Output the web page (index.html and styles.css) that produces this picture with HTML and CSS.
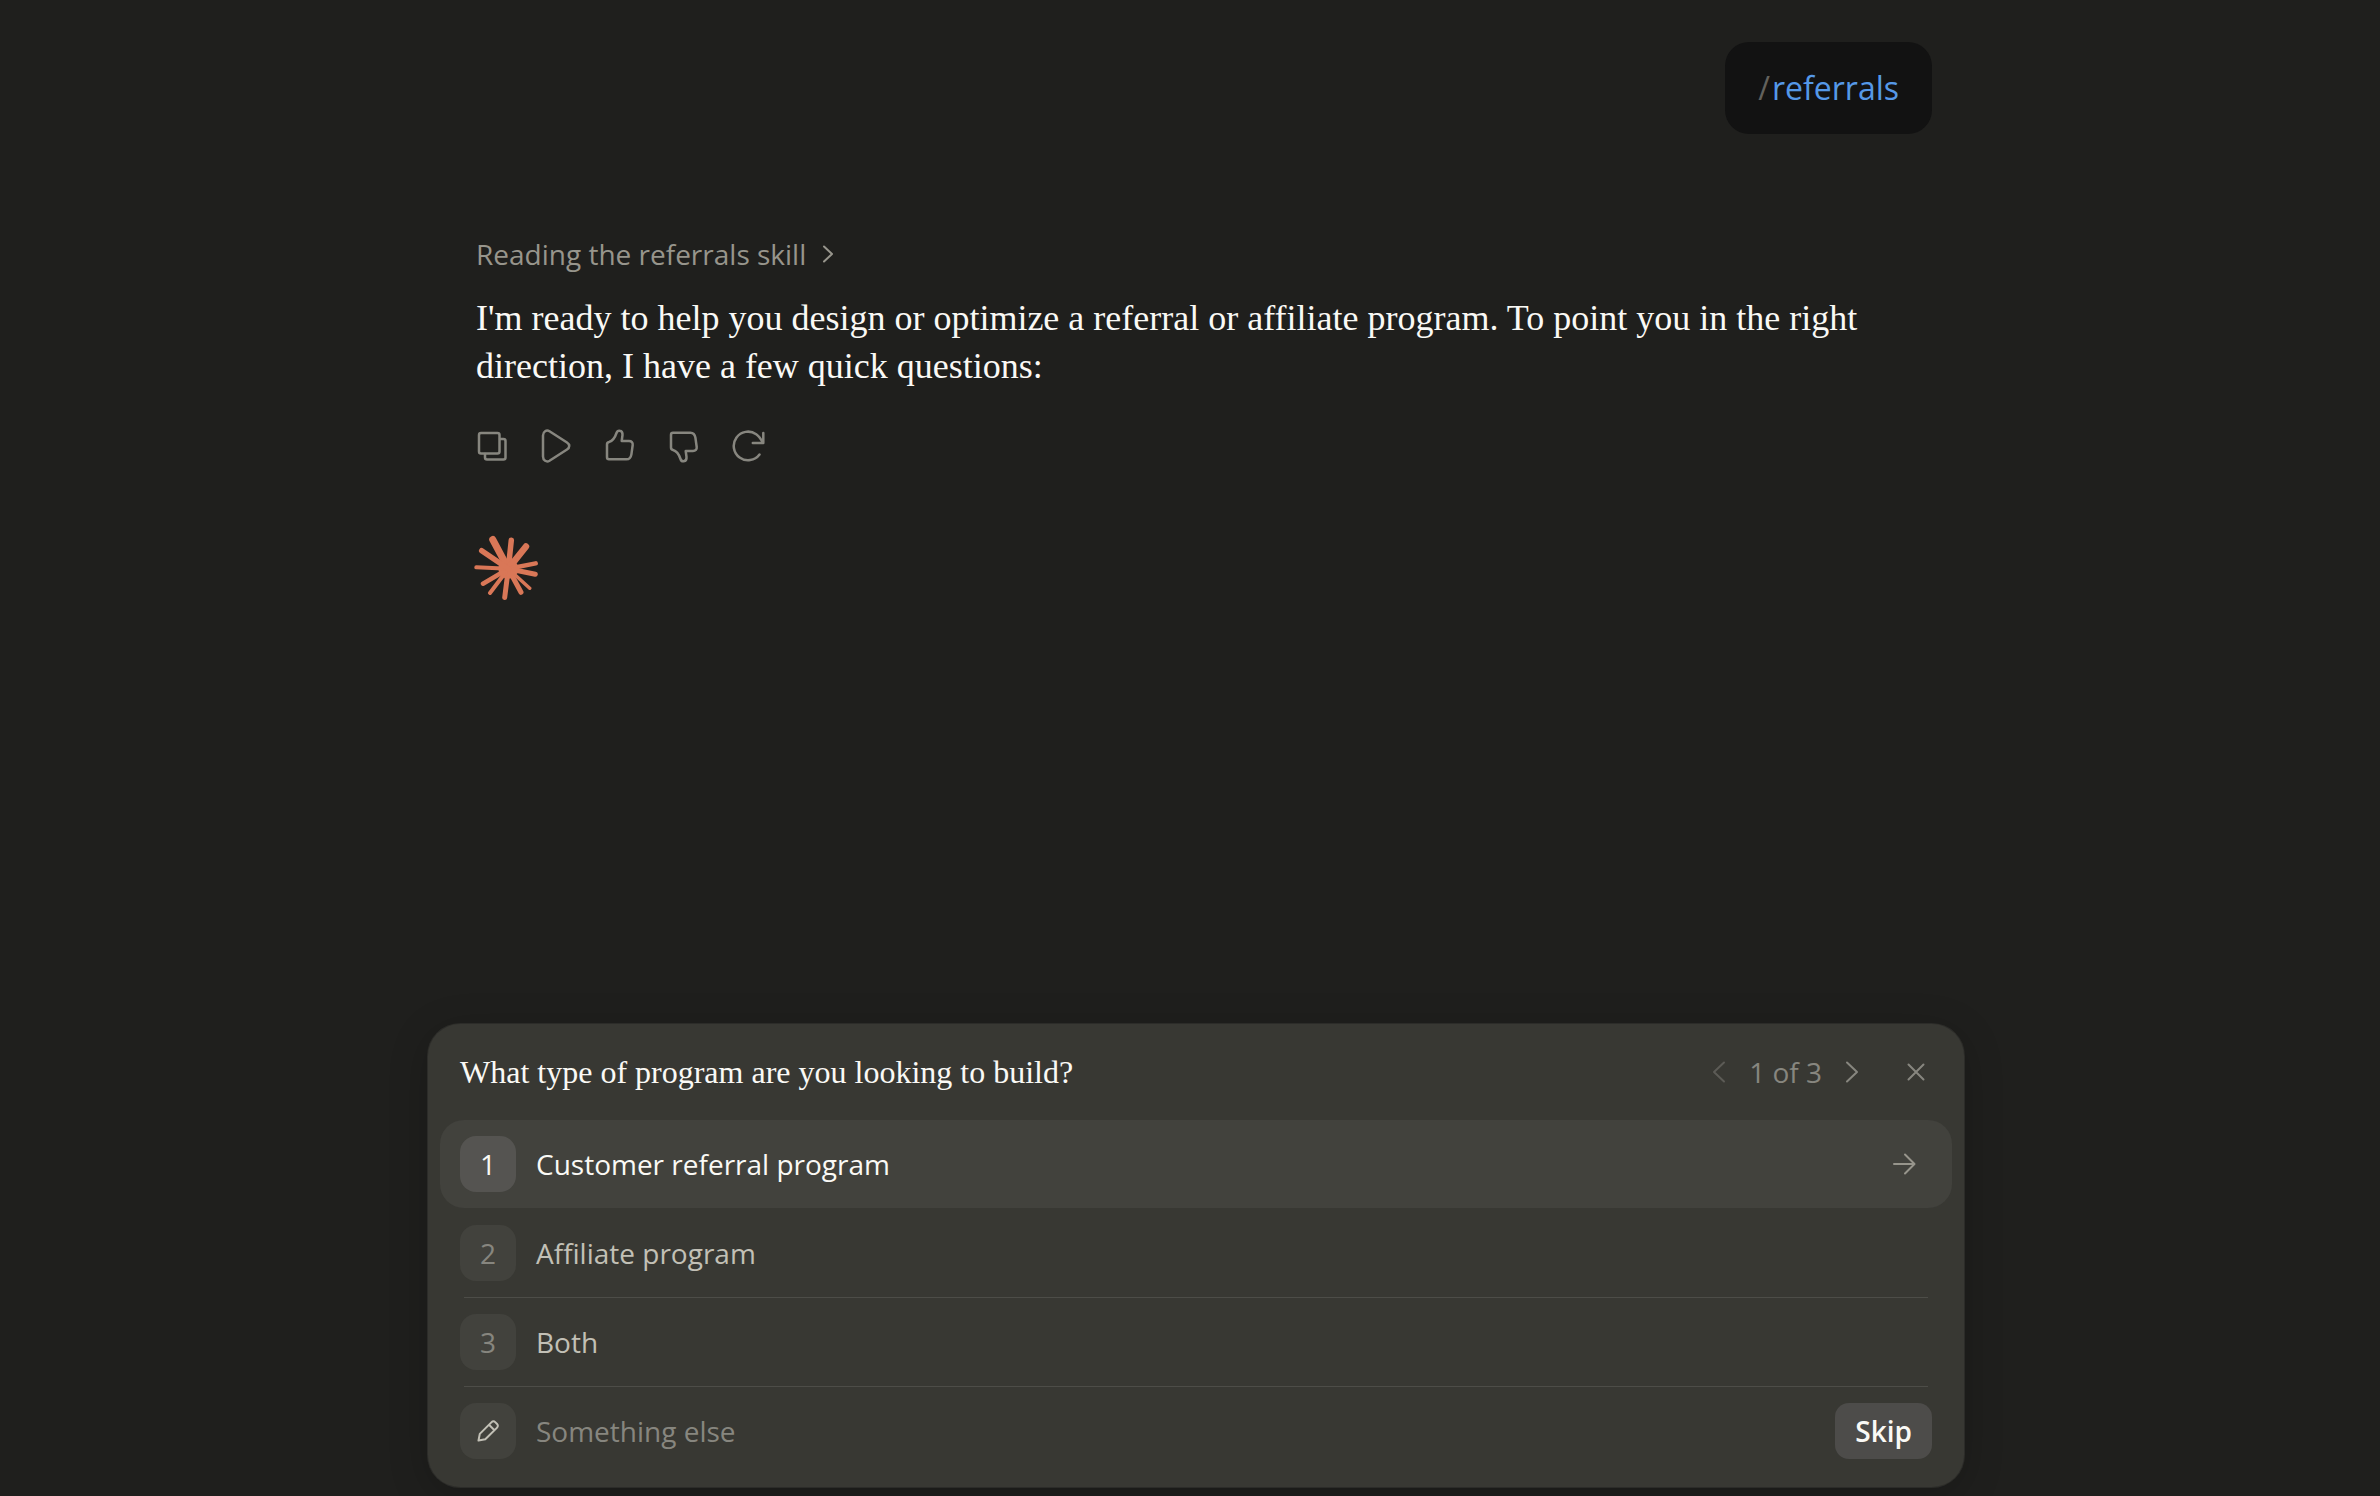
FILE: index.html
```html
<!DOCTYPE html>
<html lang="en">
<head>
  <meta charset="UTF-8" />
  <meta name="viewport" content="width=device-width, initial-scale=1.0"/>
  <title>Referrals</title>
  <link rel="stylesheet" href="styles.css">
</head>
<body>
  <div class="page">
    <main class="thread">
      <div class="bubble"><span class="slash">/</span><span class="command">referrals</span></div>

      <div class="reply">
        <button class="status" type="button">
          Reading the referrals skill
          <svg class="status-chevron" viewBox="0 0 16 24"><path d="M4 4.500l8 7.500-8 7.500"/></svg>
        </button>
        <p class="message">I'm ready to help you design or optimize a referral or affiliate program. To point you in the right direction, I have a few quick questions:</p>

        <div class="actions">
          <button class="action" type="button" aria-label="Copy">
            <svg viewBox="0 0 40 40"><rect x="7" y="7" width="20.500" height="20.500" rx="2"/><path d="M28 13h3.500a2 2 0 0 1 2 2v16.500a2 2 0 0 1-2 2H15a2 2 0 0 1-2-2V28"/></svg>
          </button>
          <button class="action" type="button" aria-label="Play">
            <svg viewBox="0 0 40 40"><path d="M7 9.500c0-4 3.500-6 6.500-4.200l17.500 11.200c3 1.900 3 5.100 0 7l-17.500 11.200c-3 1.800-6.500-.2-6.500-4.200z"/></svg>
          </button>
          <button class="action" type="button" aria-label="Good response">
            <svg viewBox="0 0 40 40"><path d="M7 18.500c0-1.500.8-2.300 2-2.500 4-1 6-4.500 7.500-9 .7-2 2-2.500 3.200-2.300 2.300.3 3 2 2.800 4.300l-.8 6h7.300c2.500 0 4 1.500 3.700 4l-1.300 9.300c-.5 3.200-2 5-5 5H9c-1.200 0-2-.8-2-2z"/></svg>
          </button>
          <button class="action" type="button" aria-label="Bad response">
            <svg viewBox="0 0 40 40"><path transform="translate(0 40) scale(1 -1)" d="M7 18.500c0-1.500.8-2.300 2-2.500 4-1 6-4.500 7.500-9 .7-2 2-2.500 3.200-2.300 2.300.3 3 2 2.800 4.300l-.8 6h7.300c2.500 0 4 1.500 3.700 4l-1.300 9.300c-.5 3.200-2 5-5 5H9c-1.200 0-2-.8-2-2z"/></svg>
          </button>
          <button class="action" type="button" aria-label="Retry">
            <svg viewBox="0 0 40 40"><path d="M31.500 28.500A14.300 14.300 0 1 1 28.200 8.200c3 2 4.800 5 6.800 8.600M35.300 7v10H24.800"/></svg>
          </button>
        </div>

        <svg class="spark" viewBox="0 0 68 68" aria-hidden="true">
          <circle cx="34.300" cy="34.700" r="10"/>
          <path stroke-width="7" d="M34.300 34.700L18.700 5.500"/>
          <path stroke-width="5.500" d="M34.300 34.700L37.300 6.300"/>
          <path stroke-width="6.500" d="M34.300 34.700L52 12.500"/>
          <path stroke-width="4.500" d="M34.300 34.700L61.700 29.400"/>
          <path stroke-width="5" d="M34.300 34.700L61.300 40.300"/>
          <path stroke-width="3.500" d="M34.300 34.700L55.700 54.200"/>
          <path stroke-width="5" d="M34.300 34.700L47 58.300"/>
          <path stroke-width="5" d="M34.300 34.700L30.700 63.500"/>
          <path stroke-width="4" d="M34.300 34.700L16 59"/>
          <path stroke-width="4.500" d="M34.300 34.700L9 49.700"/>
          <path stroke-width="4" d="M34.300 34.700L2.300 33.300"/>
          <path stroke-width="5.500" d="M34.300 34.700L7.700 16.700"/>
        </svg>
      </div>
    </main>

    <form class="panel">
      <div class="panel-header">
        <h2 class="question">What type of program are you looking to build?</h2>
        <div class="pager">
          <button class="pager-btn" type="button" aria-label="Previous" disabled>
            <svg viewBox="0 0 32 32"><path d="M21 6.500l-10 9.500 10 9.500"/></svg>
          </button>
          <span>1 of 3</span>
          <button class="pager-btn" type="button" aria-label="Next">
            <svg viewBox="0 0 32 32"><path d="M11 6.500l10 9.500-10 9.500"/></svg>
          </button>
        </div>
        <button class="pager-btn" type="button" aria-label="Close">
          <svg viewBox="0 0 32 32"><path d="M8.500 8.500l15 15M23.500 8.500l-15 15"/></svg>
        </button>
      </div>

      <ul class="options">
        <li>
          <button class="option active" type="button">
            <span class="key">1</span>
            <span class="label">Customer referral program</span>
            <span class="arrow"><svg viewBox="0 0 32 32"><path d="M6 16h20M17 6.500l9.500 9.500-9.500 9.500"/></svg></span>
          </button>
        </li>
        <li>
          <button class="option" type="button">
            <span class="key">2</span>
            <span class="label">Affiliate program</span>
          </button>
        </li>
        <li>
          <button class="option" type="button">
            <span class="key">3</span>
            <span class="label">Both</span>
          </button>
        </li>
        <li>
          <div class="option">
            <label class="key" for="other" aria-label="Something else">
              <svg viewBox="0 0 32 32"><path d="M6.500 25.500l1.300-6.600L19.600 7.100a2.500 2.500 0 0 1 3.600 0l1.900 1.900a2.500 2.500 0 0 1 0 3.600L13.300 24.300zM17 9.700l5.500 5.500"/></svg>
            </label>
            <input class="other" id="other" type="text" placeholder="Something else">
            <button class="skip" type="button">Skip</button>
          </div>
        </li>
      </ul>
    </form>
  </div>
</body>
</html>
```
FILE: styles.css
```css
* {
  margin: 0;
  padding: 0;
  box-sizing: border-box;
}

body {
  background: #1f1f1d;
  color: #faf9f5;
  font-family: "Open Sans", sans-serif;
  font-size: 28px;
  line-height: 40px;
}

button,
input {
  background: none;
  border: none;
  color: inherit;
  font: inherit;
}

button {
  cursor: pointer;
}

svg {
  display: block;
  fill: none;
  stroke: currentColor;
  stroke-width: 2;
  stroke-linecap: round;
  stroke-linejoin: round;
}

.page {
  display: flex;
  flex-direction: column;
  align-items: center;
  min-height: 100vh;
  padding: 42px 0 9px 12px;
}

.thread {
  display: flex;
  flex-direction: column;
  width: 100%;
  max-width: 1536px;
  padding: 0 32px;
}

.bubble {
  align-self: flex-end;
  display: flex;
  gap: 2px;
  padding: 22px 33px;
  border-radius: 24px;
  background: #121212;
  font-size: 32px;
  line-height: 48px;
}

.slash {
  color: #62615c;
}

.command {
  color: #5598e7;
}

.reply {
  margin-top: 100px;
  padding: 0 16px;
}

.status {
  display: flex;
  align-items: center;
  gap: 14px;
  color: #97958c;
}

.status-chevron {
  width: 16px;
  height: 24px;
}

.message {
  margin-top: 20px;
  font-family: "Liberation Serif", serif;
  font-size: 36px;
  line-height: 48px;
}

.actions {
  display: flex;
  margin: 24px -16px 0;
}

.action {
  padding: 12px;
  color: #87867f;
}

.action svg {
  width: 40px;
  height: 40px;
  stroke-width: 2.5;
}

.spark {
  width: 68px;
  height: 68px;
  margin: 56px -2px 0;
  color: #d97757;
}

.spark circle {
  fill: currentColor;
  stroke: none;
}

.panel {
  width: 100%;
  max-width: 1536px;
  margin-top: auto;
  padding: 0 12px 12px;
  border-radius: 32px;
  background: #383833;
  box-shadow: 0 0 0 1px #2c2c29, 0 8px 40px rgba(0, 0, 0, 0.2);
}

.panel-header {
  display: flex;
  align-items: center;
  gap: 32px;
  height: 96px;
  padding: 0 20px;
  color: #87867f;
}

.question {
  flex: 1;
  color: #faf9f5;
  font-family: "Liberation Serif", serif;
  font-size: 32px;
  font-weight: 400;
}

.pager {
  display: flex;
  align-items: center;
  gap: 14px;
}

.pager-btn svg {
  width: 32px;
  height: 32px;
}

.pager-btn:disabled {
  color: #5c5b56;
}

.options {
  list-style: none;
}

.options li {
  border-bottom: 1px solid transparent;
}

/* the divider is inset from the row, so it is drawn as a gradient strip */
.options li:nth-child(2),
.options li:nth-child(3) {
  border-bottom: none;
  padding-bottom: 1px;
  background: linear-gradient(#4d4d48, #4d4d48) center bottom / calc(100% - 48px) 1px no-repeat;
}

.options li:last-child {
  border-bottom: none;
}

.option {
  display: flex;
  align-items: center;
  gap: 20px;
  width: 100%;
  padding: 16px 20px;
  border-radius: 24px;
  color: #c2c0b6;
  text-align: left;
}

.option.active {
  background: #42423d;
  color: #faf9f5;
}

.key {
  display: flex;
  align-items: center;
  justify-content: center;
  width: 56px;
  height: 56px;
  border-radius: 16px;
  background: #42423d;
  color: #87867f;
}

.active .key {
  background: #555451;
  color: #faf9f5;
}

.key svg,
.arrow svg {
  width: 32px;
  height: 32px;
}

label.key {
  color: #c2c0b6;
}

.label {
  flex: 1;
}

.arrow {
  padding: 12px;
  color: #97958c;
}

.other {
  flex: 1;
  outline: none;
}

.other::placeholder {
  color: #87867f;
  opacity: 1;
}

.skip {
  height: 56px;
  padding: 0 20px;
  border-radius: 14px;
  background: #4d4c4a;
  color: #faf9f5;
  font-weight: 600;
}
```
